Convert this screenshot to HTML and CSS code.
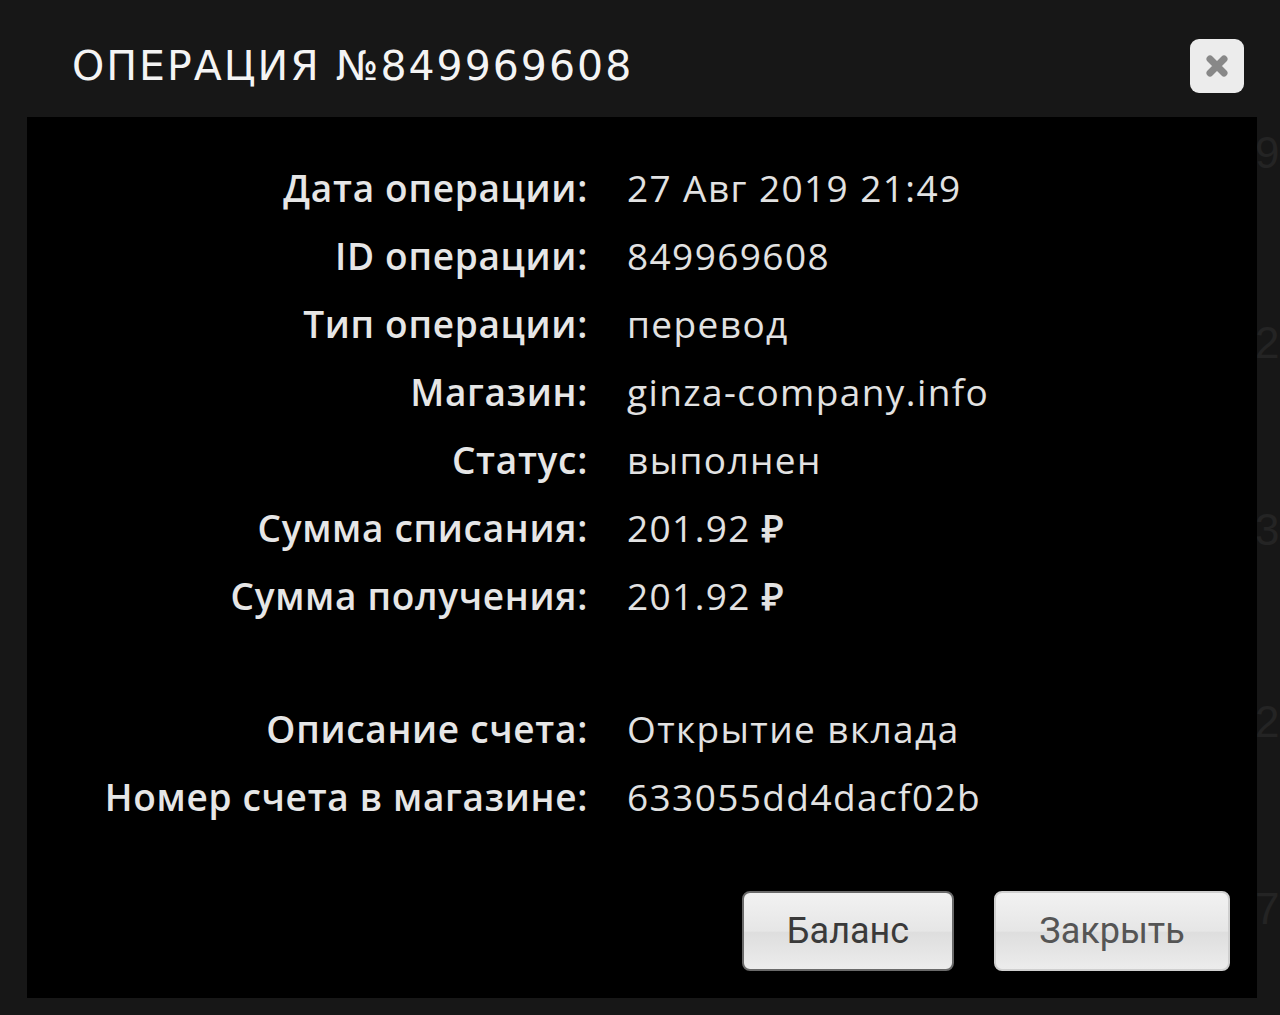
FILE: index.html
```html
<!DOCTYPE html>
<html lang="ru">
<head>
    <meta charset="UTF-8">
    <meta name="viewport" content="width=device-width, initial-scale=1.0">
    <title>Операция №849969608</title>
    <link rel="stylesheet" href="styles.css">
</head>
<body>
    <div class="backdrop">
        <span class="ghost g1">97</span>
        <span class="ghost g2">20</span>
        <span class="ghost g3">39</span>
        <span class="ghost g4">20</span>
        <span class="ghost g5">72</span>
    </div>
    <div class="modal">
        <div class="modal-header">
            <h1>ОПЕРАЦИЯ №849969608</h1>
            <button class="close-btn" aria-label="Закрыть">
                <svg width="26" height="26" viewBox="0 0 26 26">
                    <path d="M6 6 L20 20 M20 6 L6 20" stroke="#888" stroke-width="7" stroke-linecap="round"/>
                </svg>
            </button>
        </div>
        <div class="modal-body">
            <div class="details">
                <div class="label">Дата операции:</div>
                <div class="value">27 Авг 2019 21:49</div>
                <div class="label">ID операции:</div>
                <div class="value">849969608</div>
                <div class="label">Тип операции:</div>
                <div class="value">перевод</div>
                <div class="label">Магазин:</div>
                <div class="value">ginza-company.info</div>
                <div class="label">Статус:</div>
                <div class="value">выполнен</div>
                <div class="label">Сумма списания:</div>
                <div class="value">201.92 <span class="rub">₽</span></div>
                <div class="label">Сумма получения:</div>
                <div class="value">201.92 <span class="rub">₽</span></div>
                <div class="spacer"></div>
                <div class="label">Описание счета:</div>
                <div class="value">Открытие вклада</div>
                <div class="label">Номер счета в магазине:</div>
                <div class="value">633055dd4dacf02b</div>
            </div>
            <div class="actions">
                <button class="btn btn-focus">Баланс</button>
                <button class="btn btn-close">Закрыть</button>
            </div>
        </div>
    </div>
</body>
</html>
```

FILE: styles.css
```css
html, body {
    margin: 0;
    padding: 0;
}
body {
    background: #171717;
    width: 1280px;
    height: 1015px;
    overflow: hidden;
    position: relative;
    font-family: "Open Sans", sans-serif;
}
.backdrop {
    position: absolute;
    inset: 0;
}
.ghost {
    position: absolute;
    left: 1255px;
    font-family: "Liberation Sans", sans-serif;
    font-size: 44px;
    color: #242424;
}
.g1 { top: 128px; }
.g2 { top: 318px; }
.g3 { top: 505px; }
.g4 { top: 697px; }
.g5 { top: 884px; }
.modal {
    position: relative;
    margin-left: 27px;
    width: 1230px;
}
.modal-header {
    height: 117px;
    display: flex;
    align-items: flex-start;
    justify-content: space-between;
}
.modal-header h1 {
    margin: 40px 0 0 45px;
    font-family: "DejaVu Sans", sans-serif;
    font-weight: normal;
    font-size: 41px;
    line-height: 52px;
    letter-spacing: 2px;
    color: #f4f4f4;
}
.close-btn {
    width: 54px;
    height: 54px;
    margin: 39px 13px 0 0;
    border: none;
    border-radius: 9px;
    background: #ececec;
    display: flex;
    align-items: center;
    justify-content: center;
    padding: 0;
}
.modal-body {
    background: #000;
    height: 881px;
    position: relative;
}
.details {
    display: grid;
    grid-template-columns: 561px 1fr;
    column-gap: 39px;
    row-gap: 0;
    padding-top: 37px;
    font-size: 37px;
    line-height: 68px;
}
.label {
    text-align: right;
    font-weight: 600;
    letter-spacing: 0.7px;
    color: #e6e6e6;
}
.value {
    letter-spacing: 1.4px;
    color: #e2e2e2;
}
.rub {
    font-weight: 700;
}
.spacer {
    grid-column: 1 / 3;
    height: 65px;
}
.actions {
    position: absolute;
    right: 27px;
    bottom: 27px;
    display: flex;
    gap: 40px;
}
.btn {
    font-family: Roboto, sans-serif;
    font-size: 36px;
    color: #3a3a3a;
    height: 80px;
    padding: 0;
    border: 2px solid #cfcfcf;
    border-radius: 8px;
    background: linear-gradient(#f2f2f2, #e6e6e6 50%, #dedede 52%, #ececec);
}
.btn-focus {
    border-color: #6a6a6a;
    width: 212px;
}
.btn-close {
    width: 236px;
    color: #555;
}
```
